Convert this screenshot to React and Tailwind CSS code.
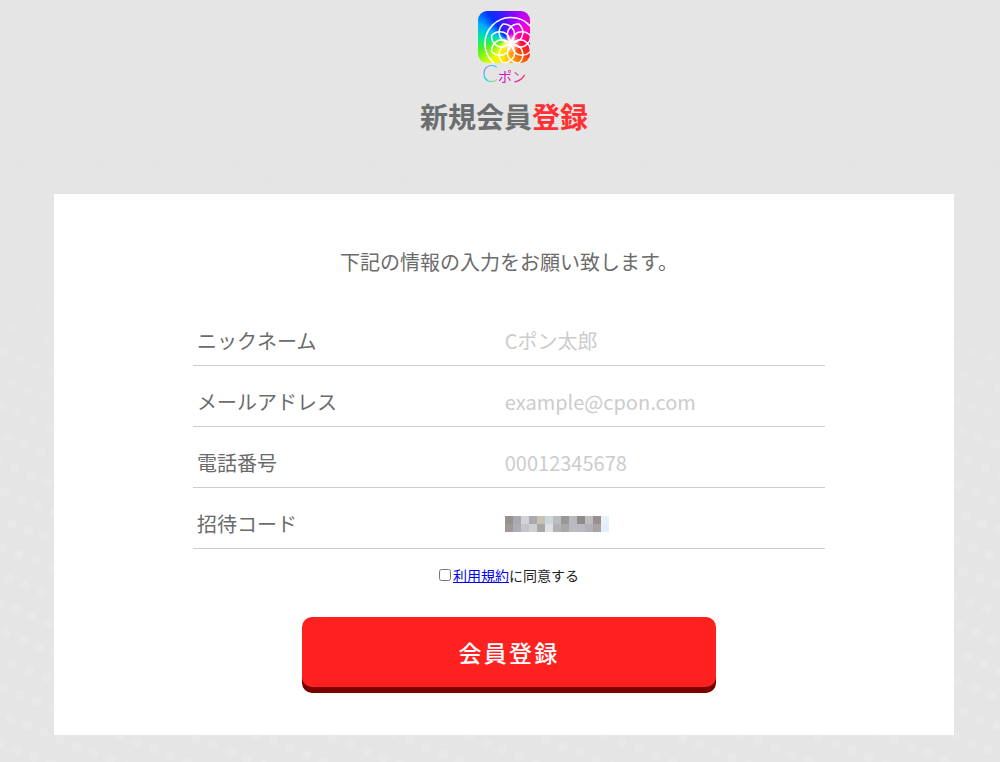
import React, { useState } from 'react';

const fields = [
  { name: 'nickname', label: 'ニックネーム', type: 'text', placeholder: 'Cポン太郎' },
  { name: 'email', label: 'メールアドレス', type: 'email', placeholder: 'example@cpon.com' },
  { name: 'tel', label: '電話番号', type: 'tel', placeholder: '00012345678' },
];

// Blocks that hide the invitation code, two rows of 8px cells
const mosaic = [
  ['#989090', '#a9a9b1', '#d2d2d8', '#aaaaae', '#c8c2b4', '#ccd6de', '#bcbcbe', '#989898', '#bababc', '#908a8c', '#bebebe', '#989090', '#e6f2fa'],
  ['#a09894', '#adadb6', '#c4c4ca', '#d0d0d4', '#a8a6a6', '#dee2e4', '#b2b2b4', '#a8a8a8', '#bcbac0', '#bcbac0', '#b4b2b8', '#a8a4a2', '#e2f0fa'],
];

const petals = [22.5, 67.5, 112.5, 157.5, 202.5, 247.5, 292.5, 337.5];

function Logo() {
  return (
    <div className="flex flex-col items-center">
      <div className="size-13 overflow-hidden rounded-[9px] bg-[conic-gradient(from_0deg_at_55%_55%,#5a10ff,#b400ff_30deg,#ff00d0_60deg,#ff0060_95deg,#ff3010_125deg,#ff9a00_160deg,#ffe600_190deg,#e8ff00_215deg,#50f020_250deg,#00e8a0_275deg,#00b0ff_300deg,#0030ff_325deg,#5a10ff)]">
        <svg viewBox="0 0 52 52" className="size-full" fill="none" stroke="#fff" aria-hidden="true">
          <defs>
            <radialGradient id="glow">
              <stop offset="0" stopColor="#fff" />
              <stop offset="0.35" stopColor="#fff" stopOpacity="0.6" />
              <stop offset="1" stopColor="#fff" stopOpacity="0" />
            </radialGradient>
          </defs>
          <circle cx="33" cy="32.5" r="10" fill="url(#glow)" stroke="none" />
          <circle cx="33" cy="32.5" r="26" strokeWidth="1.6" />
          {petals.map((deg) => (
            <path
              key={deg}
              d="M0 0C-6 -4 -9 -9 -7 -14C-6 -17 -3 -20 0 -21C3 -20 6 -17 7 -14C9 -9 6 -4 0 0Z"
              transform={`translate(33 32.5) rotate(${deg})`}
              strokeWidth="1.5"
            />
          ))}
        </svg>
      </div>
      <p className="flex items-baseline text-[24px] leading-5">
        <span className="bg-linear-to-br from-violet-500 via-cyan-400 to-lime-400 bg-clip-text font-[Lato,sans-serif] font-light text-transparent">C</span>
        <span className="bg-linear-to-r from-fuchsia-600 to-rose-500 bg-clip-text text-[14px] text-transparent">ポン</span>
      </p>
    </div>
  );
}

function Backdrop() {
  return (
    <svg className="absolute inset-0 size-full" aria-hidden="true">
      <defs>
        <pattern id="dots" width="18" height="26" patternUnits="userSpaceOnUse" patternTransform="rotate(22)">
          <circle cx="9" cy="13" r="5" fill="#e8e8e8" />
        </pattern>
        <linearGradient id="fade" x1="0" y1="0" x2="0" y2="1">
          <stop offset="0.2" stopColor="#000" />
          <stop offset="0.7" stopColor="#fff" />
        </linearGradient>
        <mask id="fadeMask">
          <rect width="100%" height="100%" fill="url(#fade)" />
        </mask>
      </defs>
      <rect width="100%" height="100%" fill="url(#dots)" mask="url(#fadeMask)" />
    </svg>
  );
}

export default function App() {
  const [formData, setFormData] = useState({ nickname: '', email: '', tel: '', code: '' });
  const [agreed, setAgreed] = useState(false);

  const handleInputChange = (e) => {
    setFormData({ ...formData, [e.target.name]: e.target.value });
  };

  const handleSubmit = (e) => {
    e.preventDefault();
  };

  return (
    <div className="relative min-h-screen bg-[#e5e5e5] pl-2 font-['Noto_Sans_CJK_JP',sans-serif] text-[#6b6b6b]">
      <Backdrop />

      <div className="relative flex flex-col items-center pt-[11px] pb-7">
        <Logo />
        <h1 className="mt-2 text-[28px] leading-11 font-bold text-[#6b6e6e]">
          新規会員<span className="text-[#ff2f33]">登録</span>
        </h1>

        <main className="mt-14 w-full max-w-[900px] bg-white pt-12 pb-[42px] pl-[10px]">
          <p className="text-center text-[20px] leading-10">下記の情報の入力をお願い致します。</p>

          <form onSubmit={handleSubmit} className="mx-auto mt-[23px] flex w-[71%] flex-col items-center">
            {fields.map((field) => (
              <div key={field.name} className="flex w-full gap-[2px] border-b border-[#ccc] px-1 pt-5 pb-2 text-[20px] leading-8">
                <label htmlFor={field.name} className="w-[49%]">{field.label}</label>
                <input
                  id={field.name}
                  name={field.name}
                  type={field.type}
                  value={formData[field.name]}
                  onChange={handleInputChange}
                  placeholder={field.placeholder}
                  className="min-w-0 flex-1 placeholder-[#ccc] outline-none"
                />
              </div>
            ))}

            <div className="flex w-full gap-[2px] border-b border-[#ccc] px-1 pt-5 pb-2 text-[20px] leading-8">
              <label htmlFor="code" className="w-[49%]">招待コード</label>
              <div className="relative flex min-w-0 flex-1 items-center">
                <input
                  id="code"
                  name="code"
                  type="text"
                  value={formData.code}
                  onChange={handleInputChange}
                  className="w-full outline-none"
                />
                <svg viewBox="0 0 104 16" className="pointer-events-none absolute h-4 w-[104px]" shapeRendering="crispEdges" aria-hidden="true">
                  {mosaic.map((row, y) =>
                    row.map((fill, x) => (
                      <rect key={`${x}-${y}`} x={x * 8} y={y * 8} width="8" height="8" fill={fill} />
                    ))
                  )}
                </svg>
              </div>
            </div>

            <div className="mt-[14px] flex items-center gap-[2px] text-[14px] leading-6 text-[#222]">
              <input
                id="agree"
                type="checkbox"
                checked={agreed}
                onChange={(e) => setAgreed(e.target.checked)}
                className="size-3"
              />
              <label htmlFor="agree">
                <a href="#terms" className="text-[#0000ee] underline">利用規約</a>に同意する
              </label>
            </div>

            <button
              type="submit"
              className="mt-[30px] mb-[6px] h-[70px] w-full max-w-[414px] cursor-pointer rounded-[10px] bg-[#ff2020] text-[23px] font-medium tracking-widest text-white shadow-[0_6px_0_#7a0000]"
            >
              会員登録
            </button>
          </form>
        </main>
      </div>
    </div>
  );
}
